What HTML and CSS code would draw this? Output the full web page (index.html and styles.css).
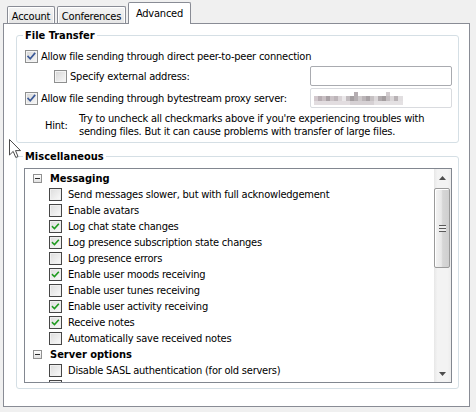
FILE: index.html
```html
<!DOCTYPE html>
<html>
<head>
<meta charset="utf-8">
<title>Advanced</title>
<link rel="stylesheet" href="styles.css">
</head>
<body>
<div class="window">
  <div class="tabs">
    <div class="tab tab-account">Account</div>
    <div class="tab tab-conf">Conferences</div>
    <div class="tab tab-sel">Advanced</div>
  </div>
  <div class="pane">
    <fieldset class="group group-ft">
      <legend>File Transfer</legend>
      <div class="row row-single">
        <span class="cb cb-win"><svg viewBox="0 0 13 13" width="11" height="11"><path d="M2.5 6.5 L5 9.2 L10.2 3" class="tick-blue"/></svg></span>
        <span class="lbl">Allow file sending through direct peer-to-peer connection</span>
      </div>
      <div class="row row-field">
        <div class="lab lab-indent">
          <span class="cb cb-win"></span>
          <span class="lbl">Specify external address:</span>
        </div>
        <div class="input input-a"></div>
      </div>
      <div class="row row-field">
        <div class="lab">
          <span class="cb cb-win"><svg viewBox="0 0 13 13" width="11" height="11"><path d="M2.5 6.5 L5 9.2 L10.2 3" class="tick-blue"/></svg></span>
          <span class="lbl">Allow file sending through bytestream proxy server:</span>
        </div>
        <div class="input input-b"><span class="mosaic"></span></div>
      </div>
      <div class="hint">
        <span class="hint-label">Hint:</span>
        <span class="hint-text">Try to uncheck all checkmarks above if you're experiencing troubles with<br>sending files. But it can cause problems with transfer of large files.</span>
      </div>
    </fieldset>

    <fieldset class="group group-misc">
      <legend>Miscellaneous</legend>
      <div class="list">
        <div class="tree">
          <div class="node head"><span class="expander"><span class="minus"></span></span><span class="head-text">Messaging</span></div>
          <div class="node item"><span class="cb cb-tree"></span><span>Send messages slower, but with full acknowledgement</span></div>
          <div class="node item"><span class="cb cb-tree"></span><span>Enable avatars</span></div>
          <div class="node item"><span class="cb cb-tree"><svg viewBox="0 0 13 13" width="11" height="11"><path d="M3 6.8 L5.3 9 L9.8 4" class="tick-green"/></svg></span><span>Log chat state changes</span></div>
          <div class="node item"><span class="cb cb-tree"><svg viewBox="0 0 13 13" width="11" height="11"><path d="M3 6.8 L5.3 9 L9.8 4" class="tick-green"/></svg></span><span>Log presence subscription state changes</span></div>
          <div class="node item"><span class="cb cb-tree"></span><span>Log presence errors</span></div>
          <div class="node item"><span class="cb cb-tree"><svg viewBox="0 0 13 13" width="11" height="11"><path d="M3 6.8 L5.3 9 L9.8 4" class="tick-green"/></svg></span><span>Enable user moods receiving</span></div>
          <div class="node item"><span class="cb cb-tree"></span><span>Enable user tunes receiving</span></div>
          <div class="node item"><span class="cb cb-tree"><svg viewBox="0 0 13 13" width="11" height="11"><path d="M3 6.8 L5.3 9 L9.8 4" class="tick-green"/></svg></span><span>Enable user activity receiving</span></div>
          <div class="node item"><span class="cb cb-tree"><svg viewBox="0 0 13 13" width="11" height="11"><path d="M3 6.8 L5.3 9 L9.8 4" class="tick-green"/></svg></span><span>Receive notes</span></div>
          <div class="node item"><span class="cb cb-tree"></span><span>Automatically save received notes</span></div>
          <div class="node head"><span class="expander"><span class="minus"></span></span><span class="head-text">Server options</span></div>
          <div class="node item"><span class="cb cb-tree"></span><span>Disable SASL authentication (for old servers)</span></div>
          <div class="node item"><span class="cb cb-tree"></span></div>
        </div>
        <div class="scrollbar">
          <div class="sb-btn"><svg viewBox="0 0 7 4" width="7" height="4"><path d="M0 4 L3.5 0 L7 4 Z" fill="#4d4d4d"/></svg></div>
          <div class="sb-track">
            <div class="sb-thumb"><span class="grip"></span></div>
          </div>
          <div class="sb-btn"><svg viewBox="0 0 7 4" width="7" height="4"><path d="M0 0 L7 0 L3.5 4 Z" fill="#4d4d4d"/></svg></div>
        </div>
      </div>
    </fieldset>
  </div>
  <svg class="cursor" viewBox="0 0 13 20" width="13" height="20"><path d="M0.5 0.5 L0.5 16 L4.2 12.4 L6.8 18.5 L9 17.5 L6.5 11.6 L11.5 11.6 Z" fill="#fff" stroke="#4a4a4a" stroke-width="1" stroke-linejoin="round"/></svg>
</div>
</body>
</html>
```

FILE: styles.css
```css
* { box-sizing: border-box; }
html, body { margin: 0; padding: 0; }
body {
  background: #f0f0f0;
  font-family: "DejaVu Sans Condensed", "Liberation Sans", sans-serif;
  font-size: 11px;
  line-height: 13px;
  letter-spacing: -0.22px;
  color: #000;
  width: 476px;
  height: 412px;
  overflow: hidden;
}
.window { position: relative; width: 476px; height: 412px; }

/* tabs */
.tabs { display: flex; align-items: flex-end; height: 23px; padding-left: 7px; }
.tab {
  height: 17px;
  padding-top: 3px;
  border: 1px solid #898c95;
  border-bottom: none;
  border-radius: 2px 2px 0 0;
  background: linear-gradient(#f4f4f4, #e6e6e6);
  box-shadow: inset 1px 1px 0 #fff, inset -1px 0 0 #fdfdfd;
  text-align: center;
  white-space: nowrap;
}
.tab-account { width: 48px; }
.tab-conf { width: 69px; margin-left: 2px; }
.tab-sel {
  width: 63px;
  height: 22px;
  margin-left: 2px;
  margin-bottom: -1px;
  padding-top: 4px;
  background: #fff;
  box-shadow: none;
  position: relative;
  z-index: 1;
}

/* pane */
.pane {
  margin-left: 3px;
  width: 467px;
  height: 384px;
  border: 1px solid #898c95;
  background: #fff;
  padding: 5px 10px 0 12px;
}

.group {
  margin: 0;
  min-width: 0;
  border: 1px solid #d5dfe5;
  border-radius: 3px;
}
.group legend {
  font-weight: bold;
  letter-spacing: 0;
  line-height: 13px;
  padding: 0 2px;
  margin-left: -2px;
}
.group-ft { padding: 6px 6px 4px 8px; }
.group-misc { margin-top: 7px; padding: 5px 6px 5px 7px; }
.group-misc legend { margin-left: -1px; }

.row { display: flex; align-items: center; white-space: nowrap; }
.row-single { height: 16px; }
.row-field { height: 20px; margin-top: 2px; justify-content: space-between; }
.lab { display: flex; align-items: center; }
.lab-indent { margin-left: 29px; }
.lbl { margin-left: 3px; }

.cb {
  flex: none;
  width: 13px;
  height: 13px;
  display: flex;
  align-items: center;
  justify-content: center;
}
.cb-win {
  border: 1px solid #8e8f8f;
  background: linear-gradient(135deg, #d6d6d6, #f8f8f8);
  box-shadow: inset 0 0 0 1px #f4f4f4;
}
.cb-tree {
  border: 1px solid #464646;
  background: linear-gradient(135deg, #dcdcdc, #fafafa);
  box-shadow: inset 0 0 0 1px #f0f0f0;
}
.tick-blue { fill: none; stroke: #3c5a98; stroke-width: 2; stroke-linecap: square; }
.tick-green { fill: none; stroke: #1f9a1f; stroke-width: 1.9; stroke-linecap: square; }

.input {
  width: 142px;
  height: 20px;
  border-radius: 2px;
  background: #fff;
  display: flex;
  align-items: center;
}
.input-a { border: 1px solid #a9abb0; }
.input-b { border: 1px solid #d9dbdf; }
.mosaic {
  margin-left: 3px;
  width: 89px;
  height: 13px;
  background:
    linear-gradient(90deg, transparent 0 40px, #b5adb1 40px 44px, transparent 44px 72px, #d2cccf 72px 76px, transparent 76px) 0 0 / 100% 4px no-repeat,
    linear-gradient(90deg, #d2c8cd 0 4px, #b7adb2 4px 8px, #c9c0c4 8px 12px, #a9a1a5 12px 16px, #cbc3c7 16px 20px, #bdb5b9 20px 24px, #d9d3d6 24px 28px, #ebe8ea 28px 32px, #c2bcbf 32px 36px, #a49ea1 36px 40px, #b4aeb1 40px 44px, #cdc8ca 44px 48px, #bbb5b8 48px 52px, #a8a2a5 52px 56px, #c6c1c3 56px 60px, #dcd8da 60px 64px, #b1abae 64px 68px, #a39d9f 68px 72px, #c4bec1 72px 76px, #dad6d8 76px 80px, #b8b2b5 80px 84px, #e1dee0 84px 89px) 0 4px / 100% 5px no-repeat,
    linear-gradient(90deg, #e2dde0 0 36px, #d6d1d4 36px 60px, #e4e1e3 60px 89px) 0 9px / 100% 4px no-repeat;
}

.hint { display: flex; margin-top: 4px; white-space: nowrap; }
.hint-label { width: 54px; padding-left: 20px; align-self: center; }

/* list */
.list {
  height: 215px;
  border: 1px solid #828790;
  background: #fff;
  display: flex;
}
.tree { flex: 1; padding-top: 1px; overflow: hidden; white-space: nowrap; }
.node { height: 16px; display: flex; align-items: center; }
.node.head { padding-left: 8px; }
.node.item { padding-left: 24px; }
.node.item .cb { margin-right: 6px; }
.head-text { font-weight: bold; letter-spacing: 0; margin-left: 8px; }
.expander {
  width: 9px;
  height: 9px;
  border: 1px solid #919191;
  background: linear-gradient(#ffffff, #e2e2e2);
  display: flex;
  align-items: center;
  justify-content: center;
}
.minus { width: 5px; height: 1px; background: #2a2a2a; }

/* scrollbar */
.scrollbar {
  width: 17px;
  display: flex;
  flex-direction: column;
  background: linear-gradient(90deg, #e7e7e7, #f3f3f3 20%, #f3f3f3 80%, #ececec);
}
.sb-btn { height: 17px; display: flex; align-items: center; justify-content: center; }
.sb-track { flex: 1; padding-top: 2px; }
.sb-thumb {
  margin: 0 1px 0 0;
  height: 80px;
  border: 1px solid #9a9a9a;
  border-radius: 2px;
  background: linear-gradient(90deg, #f4f4f4, #e8e8e8 45%, #d6d6d6 55%, #cfcfcf);
  box-shadow: inset 1px 1px 0 #fff;
  display: flex;
  align-items: center;
  justify-content: center;
}
.grip {
  width: 7px;
  height: 7px;
  background: repeating-linear-gradient(#5a5a5a 0 1px, #eeeeee 1px 3px);
}

.cursor { position: absolute; left: 9px; top: 139px; }
```
